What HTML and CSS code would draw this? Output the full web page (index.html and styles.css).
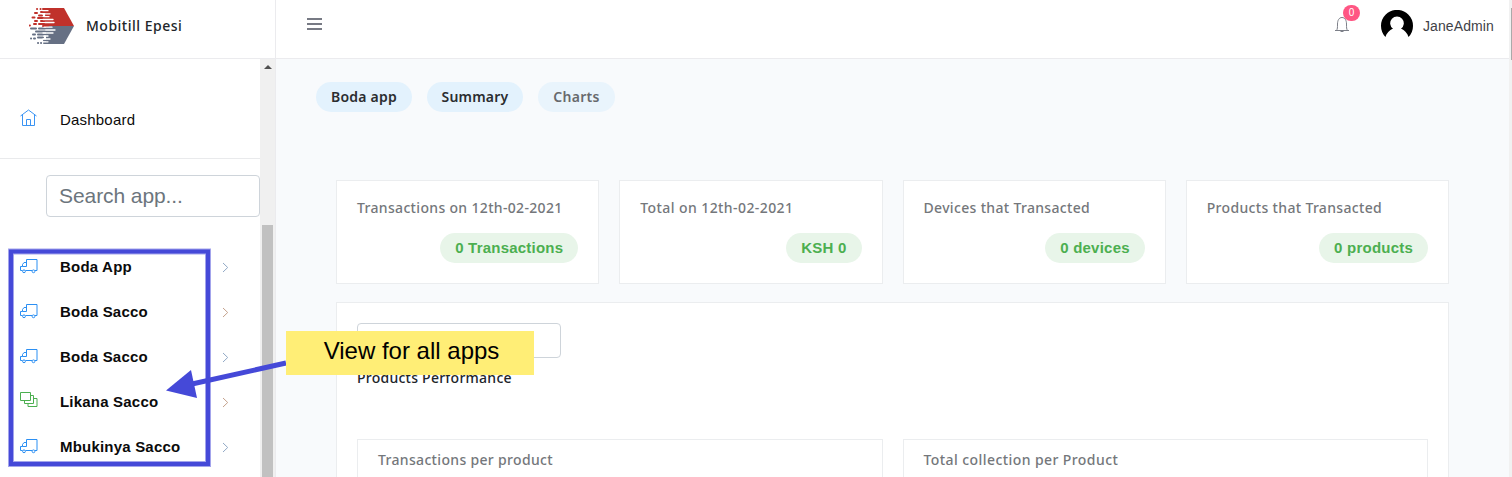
FILE: index.html
```html
<!DOCTYPE html>
<html lang="en">
<head>
<meta charset="utf-8">
<title>Mobitill Epesi</title>
<link rel="stylesheet" href="styles.css">
</head>
<body>
<svg class="sprite" aria-hidden="true">
  <symbol id="truck" viewBox="0 0 18 15"><path d="M2.500 11.500H.5v-4h2v-2l1.500-2h2.500M2.500 7.500h4V.5h10.500v11h-2M5.500 11.500h6.500"/><circle cx="4" cy="12.300" r="1.400"/><circle cx="13.500" cy="12.300" r="1.400"/></symbol>
  <symbol id="layers" viewBox="0 0 18 15"><path d="M.5.5h10v8H.5zM10.500 3.500h3v8h-9v-3M13.500 6.500h3.500v8H8v-3"/></symbol>
  <symbol id="chevron" viewBox="0 0 7 11"><path d="M1 1l4.700 4.500L1 10"/></symbol>
</svg>
<header class="topbar">
  <div class="brand">
    <svg class="logo" viewBox="0 0 46 36">
      <path fill="#c0312b" d="M16 0h19l10 18H17z"/>
      <path fill="#667084" d="M17 18h28L35 36H17z"/>
      <path fill="none" stroke="#c0312b" stroke-width="2" stroke-linecap="round" d="M14 1h4M8 1h.1M11.500 1h.1M12 4h6M6 5h2M17 7h3M10 7.500h3M3.500 9.500h2M9 10h9M12 13h8M6 13h2M5 16h2M10 16h9M.8 17.500h.1M14 18h5"/>
      <path fill="none" stroke="#667084" stroke-width="2" stroke-linecap="round" d="M2 20.500h5M10 20.500h8M7 23.500h10M4 26.500h2M9 26.500h11M9 29.500h5M2 30.500h.1M5 30.500h1M15 32.500h4M9 35h.1M12 35h.1M15 35h4"/>
      <path fill="none" stroke="#fff" stroke-width="1.300" stroke-linecap="round" d="M14 2.700h5M14 5.800h7M15 8.700h5M14 11.500h10M16 14.500h9M15 19.200h8M17 22h9M14 25h10M15 28h4M14 31h7M14 33.800h5"/>
    </svg>
    <span class="brand-name">Mobitill Epesi</span>
  </div>
  <div class="menu"><i></i><i></i><i></i></div>
  <div class="bell">
    <svg viewBox="0 0 16 17"><path d="M1 14.500h14M2.500 14.500c1-1.500 1-3 1-6.500 0-3.500 1.500-6.500 4.500-6.500s4.500 3 4.500 6.500c0 3.500 0 5 1 6.500M6.500 15.500h3"/></svg>
    <span class="count">0</span>
  </div>
  <svg class="avatar" viewBox="0 0 32 32"><path d="M4.500 27a16 16 0 1 1 23 0c-1-3.500-4-7-7.500-8.200a6.800 6.800 0 1 0-8 0c-3.500 1.200-6.500 4.700-7.500 8.200z"/></svg>
  <span class="user">JaneAdmin</span>
</header>
<div class="body">
  <aside class="sidebar">
    <nav class="nav">
      <div class="row home">
        <svg class="home-icon" viewBox="0 0 17 17"><path d="M.5 7L8.500 1l8 6M2.500 6v10.500h12V6M6.500 16.500v-6h4v6"/></svg>
        <span>Dashboard</span>
      </div>
      <div class="search">Search app...</div>
      <div class="row"><svg class="icon"><use href="#truck"/></svg><b>Boda App</b><svg class="chev"><use href="#chevron"/></svg></div>
      <div class="row"><svg class="icon"><use href="#truck"/></svg><b>Boda Sacco</b><svg class="chev tan"><use href="#chevron"/></svg></div>
      <div class="row"><svg class="icon"><use href="#truck"/></svg><b>Boda Sacco</b><svg class="chev"><use href="#chevron"/></svg></div>
      <div class="row"><svg class="icon green"><use href="#layers"/></svg><b>Likana Sacco</b><svg class="chev tan"><use href="#chevron"/></svg></div>
      <div class="row"><svg class="icon"><use href="#truck"/></svg><b>Mbukinya Sacco</b><svg class="chev"><use href="#chevron"/></svg></div>
    </nav>
    <div class="track"><div class="up"></div><div class="thumb"></div></div>
  </aside>
  <main class="main">
    <div class="tabs"><span class="tab t1">Boda app</span><span class="tab t2">Summary</span><span class="tab t3">Charts</span></div>
    <div class="stats">
      <section class="card"><h3>Transactions on 12th-02-2021</h3><span class="pill">0 Transactions</span></section>
      <section class="card"><h3 class="total">Total on 12th-02-2021</h3><span class="pill">KSH 0</span></section>
      <section class="card"><h3>Devices that Transacted</h3><span class="pill">0 devices</span></section>
      <section class="card"><h3>Products that Transacted</h3><span class="pill">0 products</span></section>
    </div>
    <section class="panel">
      <div class="field"></div>
      <h2>Products Performance</h2>
      <div class="charts">
        <div class="card"><h3>Transactions per product</h3></div>
        <div class="card"><h3 class="collection">Total collection per Product</h3></div>
      </div>
    </section>
  </main>
  <div class="page-track"><div class="page-thumb"></div></div>
</div>
<svg class="annotation" viewBox="0 0 1512 477">
  <rect x="11" y="251.500" width="197" height="212.500" fill="none" stroke="#a3a4ec" stroke-width="6"/>
  <rect x="11" y="251.500" width="197" height="212.500" fill="none" stroke="#4549d8" stroke-width="4"/>
  <path d="M286 363L192 384" stroke="#4549d8" stroke-width="5"/>
  <path d="M166 390.500L191 370l6 28z" fill="#4549d8"/>
</svg>
<div class="note">View for all apps</div>
</body>
</html>
```
FILE: styles.css
```css
* { box-sizing: border-box; }
body { margin: 0; width: 1512px; height: 477px; overflow: hidden; display: flex; flex-direction: column; position: relative; background: #fff; font-family: "Liberation Sans", Arial, sans-serif; }
h2, h3 { margin: 0; }
.sprite { position: absolute; width: 0; height: 0; }
.topbar { height: 59px; flex: none; display: flex; align-items: center; width: 1509px; border-bottom: 1px solid #ebebee; }
.brand { width: 276px; height: 58px; padding: 8px 0 0 29px; border-right: 1px solid #ebebee; display: flex; align-items: flex-start; }
.logo { width: 46px; height: 36px; }
.brand-name { margin-left: 11px; font: 500 14px/36px "Noto Sans", sans-serif; letter-spacing: .5px; color: #212529; }
.menu { width: 15px; margin: 0 auto 10px 31px; display: grid; gap: 3px; }
.menu i { height: 2px; background: #777a84; }
.bell { position: relative; width: 16px; height: 17px; margin: 0 31px 10px 0; }
.bell svg { display: block; width: 16px; height: 17px; fill: none; stroke: #7d8089; }
.count { position: absolute; left: 9px; top: -11px; width: 17px; height: 16px; border-radius: 8px; background: #ff5683; color: #fff; font-size: 10px; line-height: 16px; text-align: center; }
.avatar { width: 32px; height: 32px; margin-bottom: 7px; }
.user { width: 86px; margin: 0 0 6px 10px; font-size: 14px; color: #3f4247; letter-spacing: .1px; white-space: nowrap; }
.body { flex: 1; min-height: 0; display: flex; }
.sidebar { width: 276px; display: flex; border-right: 1px solid #ebebee; }
.nav { width: 260px; padding-top: 22px; font-size: 15px; color: #0b0b0b; }
.row { height: 45px; display: flex; align-items: center; padding-left: 20px; }
.row b { width: 162px; margin-left: 22px; letter-spacing: .2px; white-space: nowrap; }
.row.home { height: 78px; border-bottom: 1px solid #e9eaec; }
.home-icon { width: 17px; height: 17px; fill: none; stroke: #3b94f3; margin-bottom: 4px; }
.home span { margin-left: 23px; letter-spacing: .2px; }
.search { width: 214px; height: 42px; margin: 16px 0 27px 46px; padding-left: 12px; border: 1px solid #ced4da; border-radius: 4px; font-size: 21px; line-height: 40px; letter-spacing: -.08px; color: #6c757d; }
.icon { width: 18px; height: 15px; fill: none; stroke: #2b8ff3; }
.icon.green { stroke: #4caf50; margin-bottom: 4px; }
.chev { width: 7px; height: 11px; margin-top: 2px; fill: none; stroke: #91a9c6; }
.chev.tan { stroke: #c5a28c; }
.track { width: 15px; background: #f0f0f0; display: flex; flex-direction: column; align-items: center; }
.up { border: 4px solid transparent; border-top: 0; border-bottom-color: #505050; margin: 6px 0 156px; }
.thumb { width: 11px; flex: 1; background: #c1c1c1; }
.main { width: 1233px; background: #f8fafc; padding: 23px 60px 0; display: flex; flex-direction: column; }
.tabs { display: flex; gap: 15px; margin-left: -20px; }
.tab { height: 30px; border-radius: 15px; background: #e3f2fd; font: 600 14px/30px "Noto Sans", sans-serif; text-align: center; color: #2b2d30; white-space: nowrap; }
.t1, .t2 { width: 96px; letter-spacing: .2px; }
.t3 { width: 77px; opacity: .7; letter-spacing: .3px; }
.stats { display: grid; grid-template-columns: repeat(4, 1fr); gap: 20px; margin-top: 68px; }
.card { height: 104px; padding: 15px 20px 0; background: #fff; border: 1px solid #ebedef; display: flex; flex-direction: column; align-items: flex-start; }
.card h3 { font: 500 14px/23px "Noto Sans", sans-serif; color: #74777b; letter-spacing: .33px; white-space: nowrap; }
.card .total { letter-spacing: .42px; }
.card .collection { letter-spacing: .42px; }
.pill { align-self: flex-end; margin-top: 14px; height: 30px; padding: 0 15px; border-radius: 15px; background: #e8f5e9; color: #4caf50; font-size: 15px; font-weight: 700; line-height: 30px; letter-spacing: .22px; white-space: nowrap; }
.panel { flex: 1; min-height: 0; overflow: hidden; margin-top: 18px; padding: 20px 20px 0; background: #fff; border: 1px solid #ebedef; border-bottom: 0; display: flex; flex-direction: column; }
.field { flex: none; width: 204px; height: 35px; border: 1px solid #ced4da; border-radius: 4px; }
.panel h2 { flex: none; font: 500 14px/22px "Noto Sans", sans-serif; letter-spacing: .25px; color: #212529; margin: 9px 0 50px; }
.charts { flex: 1; min-height: 0; display: grid; grid-template-columns: 1fr 1fr; gap: 20px; }
.charts .card { height: auto; padding-top: 8px; border-bottom: 0; }
.page-track { width: 3px; background: #f1f1f1; display: flex; justify-content: flex-end; margin-top: -59px; padding-top: 8px; }
.page-thumb { width: 1px; height: 52px; background: #aaa; }
.annotation { position: absolute; left: 0; top: 0; width: 1512px; height: 477px; }
.note { position: absolute; left: 286px; top: 331px; width: 248px; height: 44px; background: #ffee76; color: #000; font-size: 24px; line-height: 39px; text-align: center; padding-left: 3px; }
```
